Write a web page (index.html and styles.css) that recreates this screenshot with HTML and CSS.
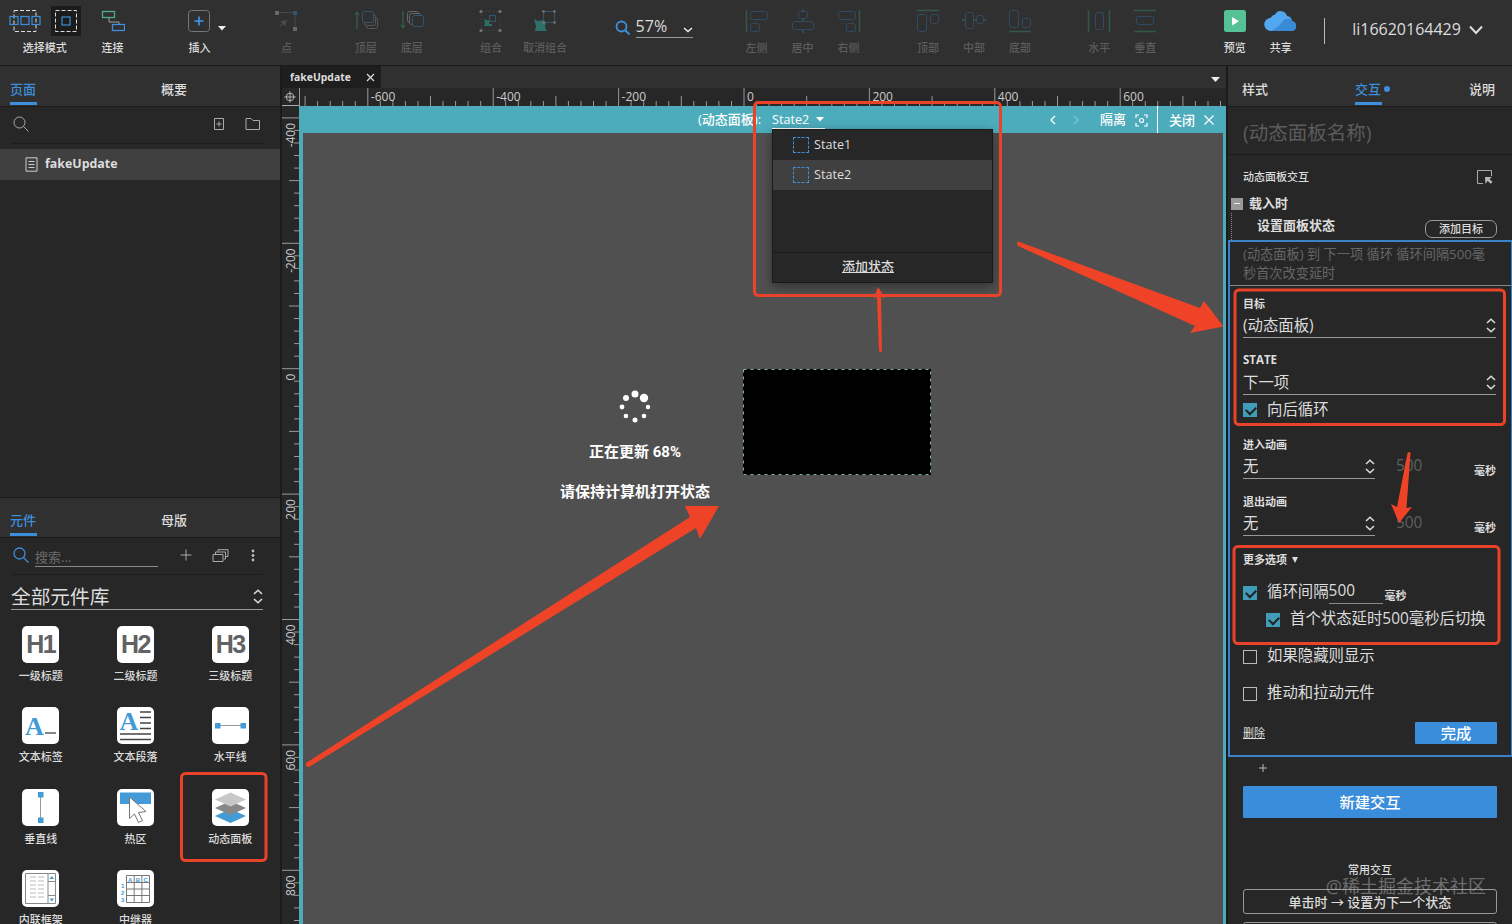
FILE: index.html
```
<!DOCTYPE html>
<html lang="zh">
<head>
    <meta charset="UTF-8">
    <meta name="viewport" content="width=device-width, initial-scale=1.0">
    <title>fakeUpdate</title>
    <link rel="stylesheet" href="styles.css">
</head>
<body>
    <div class="app">
        <header class="toolbar">
            <div class="tool tool-mode">
                <div class="mode-icons">
                    <svg width="32" height="24" viewBox="0 0 32 24" fill="none">
                        <rect x="5" y="1.5" width="22" height="21" stroke="#ddd" stroke-dasharray="4 2"/>
                        <g stroke="#3d8fdb" stroke-width="1.200"><rect x="1" y="7.5" width="8" height="8"/><rect x="12" y="7.5" width="8" height="8"/><rect x="23" y="7.5" width="8" height="8"/></g>
                    </svg>
                    <span class="mode-active">
                        <svg width="24" height="24" viewBox="0 0 24 24" fill="none">
                            <rect x="1.5" y="1.5" width="21" height="21" stroke="#ddd" stroke-dasharray="4 2"/>
                            <rect x="8" y="8" width="8" height="8" stroke="#3d8fdb" stroke-width="1.200"/>
                        </svg>
                    </span>
                </div>
                <span>选择模式</span>
            </div>
            <div class="tool">
                <svg width="24" height="24" viewBox="0 0 24 24" fill="none">
                    <rect x="1.5" y="2.5" width="12" height="6" stroke="#4fae86" stroke-width="1.300"/>
                    <path d="M8 9v4h10v2" stroke="#999"/>
                    <rect x="11.5" y="15.5" width="12" height="6" stroke="#3d8fdb" stroke-width="1.300"/>
                </svg>
                <span>连接</span>
            </div>
            <div class="tool gap-l">
                <svg class="insert" width="36" height="24" viewBox="0 0 36 24" fill="none">
                    <rect x="1.500" y="1.500" width="21" height="21" rx="3" stroke="#777"/>
                    <path d="M12 7.500v9M7.500 12h9" stroke="#3d9bf0" stroke-width="1.600"/>
                    <path d="M31 17h8l-4 4.500z" fill="#eee"/>
                </svg>
                <span>插入</span>
            </div>
            <div class="tool off gap-l">
                <svg width="24" height="24" viewBox="0 0 24 24" fill="none">
                    <path d="M2 3.500h18v17" stroke="#484848"/>
                    <g fill="#686868"><rect x="0" y="2" width="4" height="4"/><rect x="18" y="18" width="4" height="4"/></g>
                    <rect x="18" y="2" width="4" height="4" fill="#34536f"/>
                    <path d="M12 11l-2 6-2-2-3 3-.700-.700 3-3-2-2z" fill="#4c4c4c"/>
                </svg>
                <span>点</span>
            </div>
            <div class="tool off gap-m">
                <svg width="24" height="24" viewBox="0 0 24 24" fill="none">
                    <path d="M3 20V3M1 6l2-3 2 3" stroke="#31584a" stroke-width="1.500"/>
                    <rect x="12.500" y="8.500" width="11" height="11" rx="2" stroke="#555"/>
                    <rect x="10.500" y="5.500" width="11" height="11" rx="2" stroke="#555" fill="#303030"/>
                    <rect x="8.500" y="2.500" width="11" height="11" rx="2" stroke="#34536f" fill="#303030"/>
                </svg>
                <span>顶层</span>
            </div>
            <div class="tool off">
                <svg width="24" height="24" viewBox="0 0 24 24" fill="none">
                    <path d="M3 2v17M1 16l2 3 2-3" stroke="#31584a" stroke-width="1.500"/>
                    <rect x="7.500" y="2.500" width="11" height="11" rx="2" stroke="#666"/>
                    <rect x="9.500" y="4.500" width="11" height="11" rx="2" stroke="#666" fill="#303030"/>
                    <rect x="12.500" y="6.500" width="11" height="11" rx="2" stroke="#34536f" fill="#303030"/>
                </svg>
                <span>底层</span>
            </div>
            <div class="tool off gap-m">
                <svg width="24" height="24" viewBox="0 0 24 24" fill="none">
                    <rect x="2" y="2.500" width="19" height="19" stroke="#4a4a4a" stroke-dasharray="1 3"/>
                    <rect x="10.500" y="6.500" width="6" height="6" stroke="#34536f"/>
                    <path d="M5 10l3 1.500L10 11v4h3v2H5l1-3z" fill="#2e7068"/>
                    <g fill="#777"><circle cx="2" cy="2.500" r="1.600"/><circle cx="21" cy="2.500" r="1.600"/><circle cx="2" cy="21.500" r="1.600"/><circle cx="21" cy="21.500" r="1.600"/></g>
                </svg>
                <span>组合</span>
            </div>
            <div class="tool off gap-s">
                <svg width="24" height="24" viewBox="0 0 24 24" fill="none">
                    <path d="M1 10l4 2 6-1 2 3-1 4 2 4H2l1-5z" fill="#2e7068"/>
                    <rect x="10.500" y="2.500" width="11" height="11" stroke="#34536f"/>
                    <g fill="#777"><circle cx="10.500" cy="2.500" r="1.300"/><circle cx="21.500" cy="2.500" r="1.300"/><circle cx="21.500" cy="13.500" r="1.300"/><circle cx="10.500" cy="13.500" r="1.300"/></g>
                </svg>
                <span>取消组合</span>
            </div>
            <div class="zoom">
                <svg width="16" height="16" viewBox="0 0 16 16" fill="none" stroke="#3d8fdb" stroke-width="1.800"><circle cx="6.500" cy="6.500" r="5"/><path d="M10 10l4.500 4.500"/></svg>
                <div class="zoom-value">57%
                    <svg width="10" height="6" viewBox="0 0 10 6" fill="none" stroke="#eee" stroke-width="1.500"><path d="M1 1l4 3.500L9 1"/></svg>
                </div>
            </div>
            <div class="tool off gap-l">
                <svg width="24" height="24" viewBox="0 0 24 24" fill="none">
                    <path d="M1.500 1v22" stroke="#31584a" stroke-width="1.500"/>
                    <g stroke="#304a63"><rect x="5.500" y="2.500" width="17" height="8" rx="2"/><rect x="5.500" y="14.500" width="9" height="8" rx="2"/></g>
                </svg>
                <span>左侧</span>
            </div>
            <div class="tool off">
                <svg width="24" height="24" viewBox="0 0 24 24" fill="none">
                    <path d="M12 0v24" stroke="#31584a" stroke-width="1.500"/>
                    <g stroke="#304a63" fill="#303030"><rect x="7.500" y="2.500" width="9" height="7" rx="2"/><rect x="1.500" y="12.500" width="21" height="8" rx="2"/></g>
                </svg>
                <span>居中</span>
            </div>
            <div class="tool off">
                <svg width="24" height="24" viewBox="0 0 24 24" fill="none">
                    <path d="M22.500 1v22" stroke="#31584a" stroke-width="1.500"/>
                    <g stroke="#304a63"><rect x="1.500" y="2.500" width="17" height="8" rx="2"/><rect x="9.500" y="14.500" width="9" height="8" rx="2"/></g>
                </svg>
                <span>右侧</span>
            </div>
            <div class="tool off gap-m">
                <svg width="24" height="24" viewBox="0 0 24 24" fill="none">
                    <path d="M1 1.500h22" stroke="#31584a" stroke-width="1.500"/>
                    <g stroke="#304a63"><rect x="1.500" y="5.500" width="9" height="17" rx="2"/><rect x="14.500" y="5.500" width="8" height="9" rx="2"/></g>
                </svg>
                <span>顶部</span>
            </div>
            <div class="tool off">
                <svg width="24" height="24" viewBox="0 0 24 24" fill="none">
                    <path d="M0 11h24" stroke="#31584a" stroke-width="1.500"/>
                    <g stroke="#304a63" fill="#303030"><rect x="3.500" y="3.500" width="8" height="16" rx="2"/><rect x="14.500" y="6.500" width="7" height="8" rx="2"/></g>
                </svg>
                <span>中部</span>
            </div>
            <div class="tool off">
                <svg width="24" height="24" viewBox="0 0 24 24" fill="none">
                    <path d="M1 22.500h22" stroke="#31584a" stroke-width="1.500"/>
                    <g stroke="#304a63"><rect x="1.500" y="1.500" width="9" height="17" rx="2"/><rect x="14.500" y="9.500" width="8" height="9" rx="2"/></g>
                </svg>
                <span>底部</span>
            </div>
            <div class="tool off gap-m">
                <svg width="24" height="24" viewBox="0 0 24 24" fill="none">
                    <path d="M1.500 1v22M22.500 1v22" stroke="#31584a" stroke-width="1.500"/>
                    <rect x="8.500" y="3.500" width="8" height="17" rx="2" stroke="#304a63"/>
                </svg>
                <span>水平</span>
            </div>
            <div class="tool off">
                <svg width="24" height="24" viewBox="0 0 24 24" fill="none">
                    <path d="M1 1.500h22M1 22.500h22" stroke="#31584a" stroke-width="1.500"/>
                    <rect x="3.500" y="7.500" width="17" height="8" rx="2" stroke="#304a63"/>
                </svg>
                <span>垂直</span>
            </div>
            <div class="tool gap-xl">
                <svg width="24" height="24" viewBox="0 0 24 24"><rect x="1" y="1" width="22" height="22" rx="2.500" fill="#55c295"/><path d="M9 8l7 4.200-7 4.300z" fill="#fff"/></svg>
                <span>预览</span>
            </div>
            <div class="tool">
                <svg width="34" height="24" viewBox="0 0 34 24">
                    <path d="M7 22a6.500 6.500 0 0 1-.500-13A6 6 0 0 1 11 5.500a6.500 6.500 0 0 1 12 1.500 5.500 5.500 0 0 1 5 5A5.200 5.200 0 0 1 28.500 22z" fill="#52a8f0"/>
                    <path d="M7 22c3-2 8-4 11-9 2-3 5-4 7.500-3.500A5.500 5.500 0 0 1 28 12a5.200 5.200 0 0 1 .500 10z" fill="#3a8bd6"/>
                </svg>
                <span>共享</span>
            </div>
            <div class="user">li16620164429
                <svg width="14" height="10" viewBox="0 0 14 10" fill="none" stroke="#ddd" stroke-width="2"><path d="M1 1.500l6 6.500 6-6.500"/></svg>
            </div>
        </header>

        <aside class="left">
            <section class="pages">
                <nav class="tabs"><span class="tab active">页面</span><span class="tab second">概要</span></nav>
                <div class="page-tools">
                    <svg width="17" height="17" viewBox="0 0 17 17" fill="none" stroke="#aaa"><circle cx="6.500" cy="6.500" r="5.500"/><path d="M10.500 10.500l5 5"/></svg>
                    <svg class="push" width="12" height="14" viewBox="0 0 12 14" fill="none" stroke="#aaa"><path d="M1.500 1.500h9v11h-9zM6 4.500v5M3.500 7h5"/></svg>
                    <svg width="16" height="14" viewBox="0 0 16 14" fill="none" stroke="#aaa"><path d="M1 12.500v-11h5l2 2h6.500v9z"/></svg>
                </div>
                <div class="page-item">
                    <svg width="13" height="15" viewBox="0 0 13 15" fill="none" stroke="#ccc"><path d="M1 .8h11v13.400H1zM3.500 4.500h6M3.500 7.500h6M3.500 10.500h6"/></svg>
                    fakeUpdate
                </div>
            </section>
            <section class="library">
                <nav class="tabs"><span class="tab active">元件</span><span class="tab second">母版</span></nav>
                <div class="lib-search">
                    <svg width="17" height="17" viewBox="0 0 17 17" fill="none" stroke="#3d8fdb" stroke-width="1.300"><circle cx="6.500" cy="6.500" r="5.500"/><path d="M10.500 10.500l5 5"/></svg>
                    <span class="search-input">搜索...</span>
                    <svg width="12" height="12" viewBox="0 0 12 12" stroke="#aaa"><path d="M6 .5v11M.5 6h11"/></svg>
                    <svg width="17" height="13" viewBox="0 0 17 13" fill="none" stroke="#aaa"><path d="M1 5.500h10v7H1zM3.500 5V3h10v7H12M6 2.500V.7h10v6.800h-2"/></svg>
                    <svg width="4" height="13" viewBox="0 0 4 13" fill="#bbb"><circle cx="2" cy="2" r="1.400"/><circle cx="2" cy="6.500" r="1.400"/><circle cx="2" cy="11" r="1.400"/></svg>
                </div>
                <div class="lib-select">全部元件库
                    <svg width="10" height="15" viewBox="0 0 10 15"><path d="M1 5l4-3.800L9 5M1 10l4 3.800L9 10"/></svg>
                </div>
                <div class="widgets">
                    <div class="widget"><span class="tile heading">H1</span>一级标题</div>
                    <div class="widget"><span class="tile heading">H2</span>二级标题</div>
                    <div class="widget"><span class="tile heading">H3</span>三级标题</div>
                    <div class="widget"><span class="tile">
                        <svg width="37" height="37" viewBox="0 0 37 37"><text class="letter" x="3" y="27.500">A</text><path d="M23 26h11" stroke="#444" stroke-width="1.300"/></svg>
                    </span>文本标签</div>
                    <div class="widget"><span class="tile">
                        <svg width="37" height="37" viewBox="0 0 37 37"><text class="letter" x="2.500" y="22.500">A</text><path d="M23 5h11M23 10.500h11M23 16h11M23 21.500h11M3 27h31M3 32.500h31" stroke="#444" stroke-width="1.400"/></svg>
                    </span>文本段落</div>
                    <div class="widget"><span class="tile">
                        <svg width="37" height="37" viewBox="0 0 37 37"><path d="M6 18.500h25" stroke="#999"/><path d="M3 16h5.500v5.500H3zM28.500 16H34v5.500h-5.500z" fill="#429bd6"/></svg>
                    </span>水平线</div>
                    <div class="widget"><span class="tile">
                        <svg width="37" height="37" viewBox="0 0 37 37"><path d="M18.500 6v25" stroke="#999"/><path d="M16 3h5.500v5.500H16zM16 28.500h5.500V34H16z" fill="#429bd6"/></svg>
                    </span>垂直线</div>
                    <div class="widget"><span class="tile">
                        <svg width="37" height="37" viewBox="0 0 37 37"><path d="M3 3.500h31V15H3z" fill="#429bd6"/><path d="M12.500 8v21.500l5-4.500 4 8.500 4-2-4-8 7.500-1z" fill="#fff" stroke="#777"/></svg>
                    </span>热区</div>
                    <div class="widget"><span class="tile">
                        <svg width="37" height="37" viewBox="0 0 37 37"><path d="M18.500 20L34 27l-15.500 7L3 27z" fill="#429bd6"/><path d="M18.500 12L34 19l-15.500 7L3 19z" fill="#888"/><path d="M18.500 3.500L34 10.500l-15.500 7L3 10.500z" fill="#c8c8c8"/></svg>
                    </span>动态面板</div>
                    <div class="widget"><span class="tile">
                        <svg width="37" height="37" viewBox="0 0 37 37" fill="none"><path d="M3.500 3.500h30v30h-30zM26 3.500v30M26 11.500h7.500M26 25.500h7.500" stroke="#888"/><path d="M8 7h6M8 11h6M8 15h6M8 19h6M8 23h6M8 27h6M16 7h6M16 11h6M16 15h6M16 19h6M16 23h6M16 27h6" stroke="#bbb"/><path d="M27.500 9l2.300-3L32 9zM27.500 28.500l2.300 3 2.200-3z" fill="#429bd6"/></svg>
                    </span>内联框架</div>
                    <div class="widget"><span class="tile">
                        <svg width="37" height="37" viewBox="0 0 37 37"><path d="M9.500 5.500h23v27h-23zM17.200 5.500v27M24.900 5.500v27M9.500 12.500h23M9.500 19h23M9.500 25.500h23" fill="none" stroke="#777"/><g class="grid-text"><text x="11" y="11.500">A</text><text x="18.700" y="11.500">B</text><text x="26.400" y="11.500">C</text><text x="4" y="18">1</text><text x="4" y="24.500">2</text><text x="4" y="32">3</text></g></svg>
                    </span>中继器</div>
                </div>
            </section>
        </aside>

        <main class="editor">
            <div class="doc-tabs">
                <span class="doc-tab">fakeUpdate
                    <svg width="9" height="9" viewBox="0 0 9 9" stroke="#ddd" stroke-width="1.200"><path d="M1 1l7 7M8 1L1 8"/></svg>
                </span>
                <svg class="doc-more" width="9" height="5" viewBox="0 0 9 5" fill="#eee"><path d="M0 0h9L4.500 5z"/></svg>
            </div>
            <div class="ruler-row">
                <svg class="origin" width="17" height="18" viewBox="0 0 17 18" fill="none" stroke="#bbb"><circle cx="8" cy="9.500" r="4"/><path d="M8 3.500v12M2 9.500h12"/></svg>
                <svg class="ruler" id="rulerX" width="927" height="18"></svg>
            </div>
            <div class="work">
                <svg class="ruler" id="rulerY" width="17" height="818"></svg>
                <div class="panel-editor">
                    <div class="panel-bar">
                        <span class="panel-name">(动态面板):</span>
                        <div class="state-select">State2
                            <svg width="8" height="5" viewBox="0 0 8 5" fill="#fff"><path d="M0 0h8L4 4.500z"/></svg>
                            <div class="state-menu">
                                <div class="state"><i></i>State1</div>
                                <div class="state selected"><i></i>State2</div>
                                <div class="state-add"><u>添加状态</u></div>
                            </div>
                        </div>
                        <svg class="prev" width="6" height="10" viewBox="0 0 6 10" fill="none" stroke="#fff" stroke-width="1.300"><path d="M5 1L1 5l4 4"/></svg>
                        <svg class="next" width="6" height="10" viewBox="0 0 6 10" fill="none" stroke="#7dc4cf" stroke-width="1.200"><path d="M1 1l4 4-4 4"/></svg>
                        <span>隔离</span>
                        <svg class="isolate" width="13" height="13" viewBox="0 0 13 13" fill="none" stroke="#fff" stroke-width="1.200"><path d="M1 4V1h3M9 1h3v3M12 9v3H9M4 12H1V9"/><circle cx="6.500" cy="6.500" r="2"/></svg>
                        <span class="close">关闭</span>
                        <svg width="10" height="10" viewBox="0 0 10 10" stroke="#fff" stroke-width="1.200"><path d="M.5.5l9 9M9.500.5l-9 9"/></svg>
                    </div>
                    <div class="canvas">
                        <div class="update">
                            <svg width="36" height="36" viewBox="-18 -18 36 36" fill="#fff"><circle cx="0" cy="-13" r="3.500"/><circle cx="9" cy="-9" r="4.200"/><circle cx="13" r="2.200"/><circle cx="9" cy="9" r="2.300"/><circle cy="13" r="2.500"/><circle cx="-9" cy="9" r="2.300"/><circle cx="-13" r="2.400"/><circle cx="-9" cy="-9" r="3"/></svg>
                            <p>正在更新 68%</p>
                            <p>请保持计算机打开状态</p>
                        </div>
                        <svg class="black-box" width="190" height="108"><rect x="1" y="1" width="188" height="106" fill="#000"/><rect x="1.500" y="1.500" width="187" height="105" fill="none" stroke="#7fb5a0" stroke-dasharray="3 4"/></svg>
                    </div>
                </div>
            </div>
        </main>

        <aside class="right">
            <nav class="tabs spread"><span class="tab">样式</span><span class="tab active dot">交互</span><span class="tab">说明</span></nav>
            <div class="name-input">(动态面板名称)</div>
            <div class="inter-title">动态面板交互
                <svg width="17" height="16" viewBox="0 0 17 16" fill="none"><path d="M7 14.500H1.500v-13h14V7" stroke="#aaa"/><path d="M9 8h7l-2.500 2 3 3-1.800 1.800-3-3L9.500 15z" fill="#bbb"/></svg>
            </div>
            <div class="event"><i class="collapse"></i>载入时</div>
            <div class="action"><span>设置面板状态</span><button class="outline small">添加目标</button></div>
            <div class="action-box">
                <p class="summary">(动态面板) 到 下一项 循环 循环间隔500毫秒首次改变延时</p>
                <div class="form">
                    <label>目标</label>
                    <div class="select">(动态面板)<svg width="10" height="15" viewBox="0 0 10 15"><path d="M1 5l4-3.800L9 5M1 10l4 3.800L9 10"/></svg></div>
                    <label class="state-label">STATE</label>
                    <div class="select">下一项<svg width="10" height="15" viewBox="0 0 10 15"><path d="M1 5l4-3.800L9 5M1 10l4 3.800L9 10"/></svg></div>
                    <div class="check loop"><i class="box on"></i>向后循环</div>
                    <label>进入动画</label>
                    <div class="anim"><div class="select">无<svg width="10" height="15" viewBox="0 0 10 15"><path d="M1 5l4-3.800L9 5M1 10l4 3.800L9 10"/></svg></div><span class="ms">500</span><b>毫秒</b></div>
                    <label class="exit">退出动画</label>
                    <div class="anim"><div class="select">无<svg width="10" height="15" viewBox="0 0 10 15"><path d="M1 5l4-3.800L9 5M1 10l4 3.800L9 10"/></svg></div><span class="ms">500</span><b>毫秒</b></div>
                    <label class="more">更多选项 <svg width="6" height="6" viewBox="0 0 6 6" fill="#ddd"><path d="M0 0h6L3 6z"/></svg></label>
                    <div class="check interval"><i class="box on"></i>循环间隔<span class="interval-input">500</span><b>毫秒</b></div>
                    <div class="check nested"><i class="box on"></i>首个状态延时500毫秒后切换</div>
                    <div class="check tall"><i class="box"></i>如果隐藏则显示</div>
                    <div class="check tall"><i class="box"></i>推动和拉动元件</div>
                    <div class="footer"><u>删除</u><button class="primary done">完成</button></div>
                </div>
            </div>
            <div class="plus"><svg width="8" height="8" viewBox="0 0 8 8" stroke="#bbb"><path d="M4 0v8M0 4h8"/></svg></div>
            <button class="primary new">新建交互</button>
            <div class="common">常用交互</div>
            <button class="outline wide">单击时 → 设置为下一个状态</button>
            <button class="outline wide"></button>
        </aside>

        <!-- red marks over the editor -->
        <svg class="marks" width="1512" height="924" viewBox="0 0 1512 924">
            <g fill="none" stroke="#ea4329" stroke-width="3">
                <rect x="754.500" y="102.500" width="246" height="193" rx="4"/>
                <rect x="1235" y="290" width="269.500" height="134.500" rx="4"/>
                <rect x="1234" y="546.500" width="265" height="97" rx="4"/>
                <rect x="181.500" y="773.500" width="84.500" height="87" rx="4"/>
            </g>
            <g fill="#ee4327">
                <path d="M1018 241.500L1200 308l4-7 19.500 25.500L1190 333l5-7L1018 246q-2-3 0-4.500z"/>
                <path d="M306 763L690 517l-5-11 34 0-19 33-4-11L309 767q-4 0-3-4z"/>
                <path d="M878 287l7 11-4-1 1 54q-1.500 2-3 0l-2-54-3 1z"/>
                <path d="M1407.500 453q2-2 3 0l-4 55 5.500-1-13 16-8-19 6 3z"/>
            </g>
        </svg>
        <div class="watermark">@稀土掘金技术社区</div>
    </div>
    <script>
        const SCALE = 0.627;

        // 20-unit ticks, longer at every 100 and 200
        function drawRuler(id, vertical, origin, length, depth) {
            const svg = document.getElementById(id);
            let out = '';
            for (let unit = -740; unit <= 880; unit += 20) {
                const pos = origin + unit * SCALE;
                if (pos < 3 || pos > length) continue;
                const size = unit % 200 === 0 ? depth : unit % 100 === 0 ? 10 : 5;
                out += vertical
                    ? `<path d="M${depth - size} ${pos.toFixed(1)}H${depth}"/>`
                    : `<path d="M${pos.toFixed(1)} ${depth - size}V${depth}"/>`;
                if (unit % 200 === 0) {
                    out += vertical
                        ? `<text text-anchor="end" transform="translate(12.5 ${pos + 5}) rotate(-90)">${unit}</text>`
                        : `<text x="${pos + 3}" y="13">${unit}</text>`;
                }
            }
            svg.innerHTML = out;
        }

        drawRuler('rulerX', false, 444, 927, 18);
        drawRuler('rulerY', true, 262.7, 818, 17);
    </script>
</body>
</html>
```
FILE: styles.css
```
* {
    box-sizing: border-box;
    margin: 0;
    padding: 0;
}

body {
    font-family: "Open Sans", "Noto Sans CJK SC", sans-serif;
    font-size: 13px;
    line-height: 1.2;
    color: #ddd;
    background-color: #272727;
    overflow: hidden;
}

svg {
    flex: none;
    display: block;
}

button {
    font: inherit;
    color: inherit;
}

.app {
    position: relative;
    display: grid;
    grid-template: 66px 858px / 282px 944px 286px;
    width: 1512px;
    height: 924px;
    overflow: hidden;
}

/* toolbar */
.toolbar {
    grid-column: 1 / -1;
    display: flex;
    background-color: #303030;
    border-bottom: 1px solid #1b1b1b;
}

.tool {
    width: 46px;
    height: 65px;
    padding-top: 9px;
    display: flex;
    flex-direction: column;
    align-items: center;
    gap: 8px;
    font-size: 11px;
    font-weight: 500;
    white-space: nowrap;
    line-height: 14px;
}

.tool-mode { width: 89.5px; }

.mode-icons {
    display: flex;
    gap: 10px;
    height: 24px;
    align-items: center;
}

.mode-active {
    background-color: #1c1c1c;
    padding: 3px;
}

.insert { overflow: visible; margin-right: -10px; }

.off { color: #5c5c5c; }
.gap-s { margin-left: 8px; }
.gap-m { margin-left: 33.3px; }
.gap-l { margin-left: 41px; }
.gap-xl { margin-left: 43.5px; }

.zoom {
    display: flex;
    align-items: center;
    gap: 5px;
    width: 78px;
    height: 38px;
    margin: 9px 0 0 46.5px;
}

.zoom-value {
    display: flex;
    align-items: center;
    justify-content: space-between;
    width: 57px;
    height: 22px;
    margin-top: -2px;
    border-bottom: 1px solid #999;
    font-size: 16px;
}

.zoom-value svg { margin-top: 6px; }

.user {
    display: flex;
    align-items: center;
    gap: 8px;
    height: 26px;
    margin: 18px 0 0 20.5px;
    padding: 0 0 2px 27px;
    border-left: 1px solid #bbb;
    font-size: 16px;
}

/* tabs */
.tabs {
    display: flex;
    height: 41px;
    padding: 8px 0 0 10px;
    background-color: #303030;
    border-bottom: 1px solid #1b1b1b;
    font-weight: 500;
}

.tab {
    height: 31px;
    line-height: 31px;
}

.tab.active {
    width: 27px;
    color: #3d8fdb;
    border-bottom: 3px solid #3d8fdb;
}

.tab.second { margin-left: 124px; }

.tabs.spread {
    justify-content: space-between;
    padding: 8px 17px 0 14px;
}

.dot { position: relative; }

.dot::after {
    content: '';
    position: absolute;
    right: -8px;
    top: 12px;
    width: 6px;
    height: 6px;
    border-radius: 50%;
    background-color: #3d8fdb;
}

/* left column */
.left {
    display: grid;
    grid-template-rows: 431px 427px;
    border-right: 2px solid #1b1b1b;
    min-height: 0;
}

.page-tools {
    display: flex;
    align-items: center;
    gap: 20px;
    height: 37px;
    margin: 0 15px 5px 12px;
    padding: 0 4px 2px 1px;
    border-bottom: 1px solid #1d1d1d;
}

.push { margin-left: auto; }

.page-item {
    display: flex;
    align-items: center;
    gap: 7px;
    height: 31px;
    padding-left: 25px;
    background-color: #404040;
    font-size: 12.4px;
    font-weight: bold;
}

.library {
    border-top: 1px solid #1b1b1b;
    overflow: hidden;
}

.library .tabs { height: 40px; padding-top: 7px; }

.lib-search {
    display: flex;
    align-items: center;
    height: 37px;
    margin: 0 17px 0 12px;
    padding: 0 8px 2px 1px;
    border-bottom: 1px solid #1d1d1d;
}

.search-input {
    width: 123px;
    height: 23px;
    margin: 0 22px 0 5px;
    padding-top: 6px;
    color: #6b6b6b;
    border-bottom: 1px solid #888;
}

.lib-search svg:nth-of-type(3) { margin: 0 22px 0 20px; }

.lib-select {
    display: flex;
    align-items: center;
    justify-content: space-between;
    height: 28px;
    margin: 7px 17px 0 11px;
    padding-top: 2px;
    border-bottom: 1px solid #999;
    font-size: 19.7px;
}

.widgets {
    display: grid;
    grid-template-columns: repeat(3, 37px);
    grid-auto-rows: 81.4px;
    column-gap: 57.7px;
    padding: 16px 0 0 22.3px;
}

.widget {
    display: flex;
    flex-direction: column;
    align-items: center;
    gap: 6px;
    font-size: 11px;
    font-weight: 500;
    line-height: 14px;
    white-space: nowrap;
}

.tile {
    width: 37px;
    height: 37px;
    border-radius: 5px;
    background-color: #fff;
}

.heading {
    font: bold 25px/37px "Liberation Sans", sans-serif;
    letter-spacing: -1.5px;
    text-align: center;
    color: #626262;
}

.letter {
    font: bold 26px "Liberation Serif", serif;
    fill: #429bd6;
}

.grid-text {
    font: bold 6px "Liberation Sans", sans-serif;
    fill: #429bd6;
}

/* editor */
.editor { min-width: 0; }

.doc-tabs {
    display: flex;
    align-items: center;
    justify-content: space-between;
    height: 22px;
    padding-right: 6px;
    background-color: #303030;
}

.doc-tab {
    display: flex;
    align-items: center;
    justify-content: space-between;
    width: 99px;
    height: 22px;
    padding: 1px 6px 0 8px;
    background-color: #1e1e1e;
    font-size: 10.4px;
    font-weight: bold;
}

.doc-more { margin-top: 4px; }

.ruler-row {
    display: flex;
    height: 18px;
}

.origin { border-bottom: 1px solid #aaa; }

.ruler path {
    stroke: #999;
}

.ruler text {
    font: 12px "Open Sans", sans-serif;
    fill: #ccc;
}

#rulerX { border-left: 1px solid #999; }

.work {
    display: flex;
    height: 818px;
}

.panel-editor {
    width: 927px;
    border: solid #4dacbc;
    border-width: 0 3px 0 4px;
}

.panel-bar {
    display: flex;
    align-items: center;
    height: 27px;
    margin-left: 395px;
    padding-top: 1px;
    color: #fff;
    font-weight: 500;
    background-color: #4dacbc;
    box-shadow: -395px 0 #4dacbc;
}

.panel-name { width: 74px; white-space: nowrap; }

.state-select {
    position: relative;
    display: flex;
    align-items: center;
    gap: 7px;
    width: 53px;
    height: 18px;
    padding-bottom: 0;
    border-bottom: 1px solid #fff;
    font-size: 12.6px;
}

.state-menu {
    position: absolute;
    left: 0;
    top: 18px;
    width: 221px;
    height: 154px;
    background-color: #272727;
    border: 1px solid #1a1a1a;
    box-shadow: 0 3px 10px rgba(0,0,0,0.4);
    color: #ddd;
}

.state {
    display: flex;
    align-items: center;
    gap: 5px;
    height: 30px;
    padding-left: 20px;
}

.state i {
    width: 16px;
    height: 16px;
    border: 1px dashed #3d8fdb;
}

.state.selected { background-color: #404040; }

.state-add {
    height: 30px;
    margin-top: 62px;
    padding-right: 29px;
    border-top: 1px solid #1a1a1a;
    font-size: 13px;
    line-height: 26px;
    text-align: center;
}

.prev { margin-left: 225px; }
.next { margin: 0 21px 0 17px; }
.isolate { margin: 0 9px; }

.close {
    height: 27px;
    margin: -1px 9px 0 0;
    padding-left: 11px;
    border-left: 1px solid #fff;
    line-height: 28px;
}

.canvas {
    display: flex;
    align-items: flex-start;
    height: 791px;
    padding: 235px 0 0 257px;
    background-color: #505050;
}

.update {
    display: flex;
    flex-direction: column;
    align-items: center;
    width: 150px;
    margin: 21px 32px 0 0;
    color: #fff;
    font-family: Roboto, "Noto Sans CJK SC", sans-serif;
    font-size: 15px;
    font-weight: bold;
    white-space: nowrap;
}

.update p {
    height: 39.5px;
    line-height: 20px;
}

.update svg { margin-bottom: 17px; }

/* right column */
.right {
    display: flex;
    flex-direction: column;
    border-left: 2px solid #1b1b1b;
    overflow: hidden;
}

.right > * { flex: none; }

.name-input {
    height: 48px;
    padding-left: 15px;
    border-bottom: 1px solid #1b1b1b;
    color: #5c5c5c;
    font-size: 19.5px;
    line-height: 52px;
}

.inter-title {
    display: flex;
    align-items: center;
    justify-content: space-between;
    height: 39px;
    padding: 5px 19px 0 15px;
    font-size: 11px;
    font-weight: 500;
}

.event {
    display: flex;
    align-items: center;
    gap: 6px;
    height: 19px;
    padding-left: 3px;
    font-weight: bold;
}

.collapse {
    width: 12px;
    height: 12px;
    background: linear-gradient(#eee, #eee) center / 6px 1px no-repeat #999;
}

.action {
    display: flex;
    justify-content: space-between;
    height: 27px;
    margin-left: 3px;
    padding: 5px 15px 0 25px;
    border-left: 1px dotted #888;
    font-weight: bold;
}

.outline {
    border: 1px solid #999;
    border-radius: 5px;
    background: none;
    font-weight: 500;
}

.small {
    width: 72px;
    height: 18px;
    margin-top: 2px;
    border-radius: 7px;
    font-size: 11px;
    line-height: 14px;
}

.action-box {
    height: 517px;
    border: 2px solid #3a83cb;
    border-right-width: 1px;
}

.summary {
    height: 44px;
    padding: 3px 18px 0 13px;
    border-bottom: 1px solid #888;
    color: #666;
    font-size: 13.2px;
    line-height: 18.5px;
}

.form {
    padding: 8px 15px 0 13px;
    font-size: 15.4px;
}

.form label {
    display: flex;
    align-items: center;
    gap: 5px;
    height: 20px;
    font-size: 11px;
    font-weight: bold;
}

.select {
    display: flex;
    align-items: center;
    justify-content: space-between;
    height: 24px;
    padding-top: 2px;
    border-bottom: 1px solid #999;
}

.select svg,
.lib-select svg {
    fill: none;
    stroke: #ddd;
    stroke-width: 1.5;
}

.select svg { margin-top: -2px; }

.form .state-label { margin-top: 11px; height: 22px; padding-bottom: 1px; font-size: 11.5px; }

.check {
    display: flex;
    align-items: center;
    height: 27px;
    white-space: nowrap;
}

.loop { height: 30px; margin-bottom: 10px; }

.box {
    width: 14px;
    height: 14px;
    margin-right: 10px;
    border: 1px solid #bbb;
}

.box.on {
    position: relative;
    border: none;
    background-color: #419cb8;
}

.box.on::after {
    content: '';
    position: absolute;
    left: 3px;
    top: 3px;
    width: 8px;
    height: 5px;
    border: solid #222;
    border-width: 0 0 2px 2px;
    transform: rotate(-45deg);
}

.anim {
    display: flex;
    height: 24px;
}

.anim .select { width: 132px; }

.ms {
    margin-left: 21px;
    color: #5f5f5f;
    line-height: 22px;
}

.form b {
    font-size: 11px;
    font-weight: bold;
}

.anim b {
    margin-left: auto;
    line-height: 32px;
}

.form .exit { margin-top: 13px; }
.form .more { margin-top: 13px; height: 22px; }

.interval { margin-top: 8px; }

.interval-input {
    width: 54px;
    height: 22px;
    margin-right: 2px;
    border-bottom: 1px solid #888;
}

.interval b { padding-top: 7px; }

.nested { padding-left: 23px; }

.tall { height: 37px; }
.nested + .tall { margin-top: 5px; }

.footer {
    display: flex;
    align-items: center;
    justify-content: space-between;
    height: 42px;
    margin-right: -1px;
    font-size: 11px;
}

.primary {
    border: none;
    border-radius: 1px;
    background-color: #3a8dda;
    color: #fff;
    font-size: 15.3px;
    font-weight: 500;
}

.done {
    width: 82px;
    height: 22px;
    line-height: 20px;
}

.plus {
    height: 29px;
    padding: 7px 0 0 31px;
}

.new {
    height: 32px;
    margin: 0 15px;
}

.common {
    height: 71px;
    padding-top: 45px;
    font-size: 11px;
    font-weight: 500;
    text-align: center;
}

.wide {
    height: 25px;
    margin: 0 15px 8px;
    border-radius: 3px;
    font-size: 13px;
    line-height: 22px;
}

/* overlays */
.marks {
    position: absolute;
    left: 0;
    top: 0;
    pointer-events: none;
}

.watermark {
    position: absolute;
    right: 26px;
    bottom: 26px;
    color: rgba(180,180,180,0.5);
    font-size: 18px;
}
```
